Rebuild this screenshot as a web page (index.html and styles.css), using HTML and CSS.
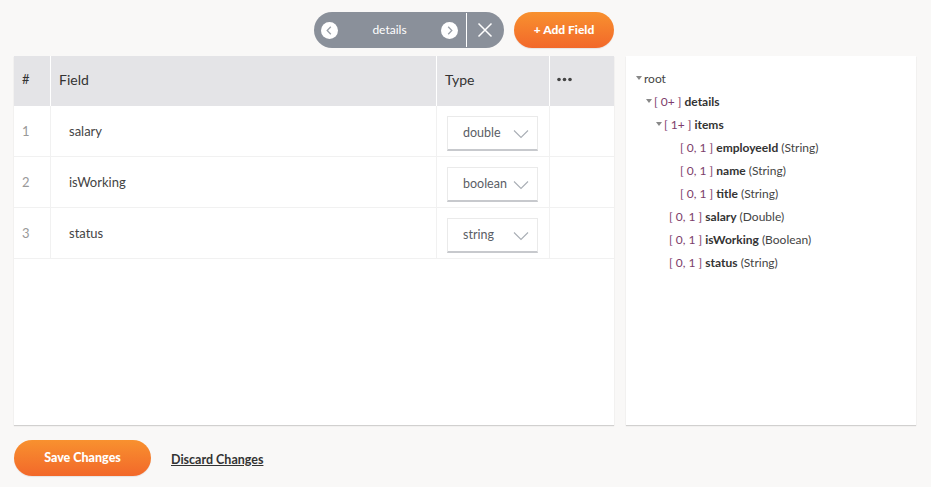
FILE: index.html
```html
<!DOCTYPE html>
<html>
<head>
<meta charset="utf-8">
<link rel="stylesheet" href="styles.css">
</head>
<body>
<div class="topbar">
  <div class="pill">
    <span class="circ"><svg width="17" height="17" viewBox="0 0 17 17"><path d="M9.8 4.8 L6.2 8.5 L9.8 12.2" fill="none" stroke="#9aa0a8" stroke-width="1.3"/></svg></span>
    <span class="pill-text">details</span>
    <span class="circ"><svg width="17" height="17" viewBox="0 0 17 17"><path d="M7.2 4.8 L10.8 8.5 L7.2 12.2" fill="none" stroke="#9aa0a8" stroke-width="1.3"/></svg></span>
    <span class="divider"></span>
    <span class="close"><svg width="16" height="16" viewBox="0 0 16 16"><path d="M1.5 1.5 L14.5 14.5 M14.5 1.5 L1.5 14.5" stroke="#fff" stroke-width="1.5"/></svg></span>
  </div>
  <button class="btn add">+ Add Field</button>
</div>
<div class="main">
  <div class="panel table-panel">
    <div class="row head">
      <div class="c num">#</div>
      <div class="c field">Field</div>
      <div class="c type">Type</div>
      <div class="c more"><svg width="15" height="5" viewBox="0 0 15 5"><circle cx="2" cy="2.5" r="1.8" fill="#444"/><circle cx="7.5" cy="2.5" r="1.8" fill="#444"/><circle cx="13" cy="2.5" r="1.8" fill="#444"/></svg></div>
    </div>
    <div class="row">
      <div class="c num">1</div>
      <div class="c field val">salary</div>
      <div class="c type"><div class="select"><span>double</span><svg width="16" height="10" viewBox="0 0 16 10"><path d="M1 1.5 L8 8.5 L15 1.5" fill="none" stroke="#a9aeb5" stroke-width="1.1"/></svg></div></div>
      <div class="c more"></div>
    </div>
    <div class="row">
      <div class="c num">2</div>
      <div class="c field val">isWorking</div>
      <div class="c type"><div class="select"><span>boolean</span><svg width="16" height="10" viewBox="0 0 16 10"><path d="M1 1.5 L8 8.5 L15 1.5" fill="none" stroke="#a9aeb5" stroke-width="1.1"/></svg></div></div>
      <div class="c more"></div>
    </div>
    <div class="row">
      <div class="c num">3</div>
      <div class="c field val">status</div>
      <div class="c type"><div class="select"><span>string</span><svg width="16" height="10" viewBox="0 0 16 10"><path d="M1 1.5 L8 8.5 L15 1.5" fill="none" stroke="#a9aeb5" stroke-width="1.1"/></svg></div></div>
      <div class="c more"></div>
    </div>
  </div>
  <div class="panel tree">
    <div class="node l0"><span class="tri"></span>root</div>
    <div class="node l1"><span class="tri"></span><span class="br">[ 0+ ]</span> <b>details</b></div>
    <div class="node l2"><span class="tri"></span><span class="br">[ 1+ ]</span> <b>items</b></div>
    <div class="node l3"><span class="br">[ 0, 1 ]</span> <b>employeeId</b> (String)</div>
    <div class="node l3"><span class="br">[ 0, 1 ]</span> <b>name</b> (String)</div>
    <div class="node l3"><span class="br">[ 0, 1 ]</span> <b>title</b> (String)</div>
    <div class="node l2b"><span class="br">[ 0, 1 ]</span> <b>salary</b> (Double)</div>
    <div class="node l2b"><span class="br">[ 0, 1 ]</span> <b>isWorking</b> (Boolean)</div>
    <div class="node l2b"><span class="br">[ 0, 1 ]</span> <b>status</b> (String)</div>
  </div>
</div>
<div class="footer">
  <button class="btn save">Save Changes</button>
  <a class="discard" href="#">Discard Changes</a>
</div>
</body>
</html>
```
FILE: styles.css
```css
* { box-sizing: border-box; }
body {
  margin: 0;
  background: #f9f8f7;
  font-family: Lato, "Open Sans", "Liberation Sans", sans-serif;
  color: #333;
  width: 931px;
  height: 487px;
  overflow: hidden;
}
.topbar {
  display: flex;
  justify-content: center;
  gap: 10px;
  padding: 12px 3px 0 0;
  height: 56px;
}
.pill {
  width: 190px;
  height: 36px;
  border-radius: 18px;
  background: #8a909a;
  display: flex;
  align-items: center;
  padding-left: 7px;
}
.circ {
  width: 17px;
  height: 17px;
  border-radius: 50%;
  background: #fff;
  display: flex;
}
.pill-text {
  width: 103px;
  text-align: center;
  color: #fff;
  font-size: 12px;
  margin-top: -2px;
}
.divider {
  width: 1px;
  height: 34px;
  background: #fff;
  margin-left: 8px;
}
.close {
  flex: 1;
  display: flex;
  justify-content: center;
  align-items: center;
  padding-right: 2px;
}
.btn {
  border: none;
  border-radius: 18px;
  height: 36px;
  color: #fff;
  font-family: Lato, "Liberation Sans", sans-serif;
  font-weight: 900;
  font-size: 12px;
  background: linear-gradient(#f8912f, #f2682a);
  box-shadow: 0 1px 1px rgba(0,0,0,0.08);
  padding: 0 0 2px 0;
}
.add { width: 100px; }
.main {
  display: grid;
  grid-template-columns: 600px 290px;
  gap: 12px;
  padding-left: 14px;
}
.panel {
  background: #fff;
  height: 369px;
  box-shadow: 0 1px 1px rgba(0,0,0,0.16);
}
.row {
  display: grid;
  grid-template-columns: 36px 386px 113px 65px;
  height: 51px;
  border-bottom: 1px solid #f1f1f1;
}
.row.head {
  height: 50px;
  background: #e4e4e7;
  border-bottom: none;
}
.c {
  border-left: 1px solid #f1f1f1;
  display: flex;
  align-items: center;
  font-size: 13px;
}
.head .c { border-left: 1px solid #fff; font-size: 14px; color: #333; padding-bottom: 4px; }
.c.num { border-left: none; padding-left: 8px; color: #999; }
.head .c.num { border-left: none; color: #333; font-size: 13px; }
.c.field { padding-left: 8px; }
.c.field.val { padding-left: 18px; color: #444; }
.c.type { padding-left: 10px; }
.head .c.type { padding-left: 8px; }
.c.more { padding-left: 7px; }
.head .c.more { align-items: flex-start; padding-top: 21px; }
.select {
  width: 91px;
  height: 35px;
  margin-top: 4px;
  border: 1px solid #eaeaea;
  border-bottom: 2px solid #c7c9cd;
  display: flex;
  align-items: center;
  justify-content: space-between;
  padding: 0 8px 0 15px;
  color: #5a5e66;
  font-size: 12.5px;
}
.select svg { margin-top: 2px; }
.tree { padding: 11px 0 0 0; font-size: 12px; color: #444; }
.node { height: 23px; line-height: 23px; white-space: pre; }
.node b { font-weight: 700; color: #333; }
.tri {
  display: inline-block;
  vertical-align: middle;
  width: 0; height: 0;
  border-left: 3px solid transparent;
  border-right: 3px solid transparent;
  border-top: 4px solid #888;
  margin: -4px 2px 0 0;
}
.br { color: #7d3d6c; }
.l0 { padding-left: 10px; }
.l1 { padding-left: 20px; }
.l2 { padding-left: 30px; }
.l3 { padding-left: 54px; }
.l2b { padding-left: 43px; }
.footer {
  display: flex;
  align-items: center;
  padding: 15px 0 0 14px;
  gap: 20px;
}
.save { width: 137px; font-size: 12.5px; }
.discard {
  color: #333;
  font-size: 12.5px;
  font-weight: 700;
  text-decoration: underline;
  margin-top: 2px;
}
```
